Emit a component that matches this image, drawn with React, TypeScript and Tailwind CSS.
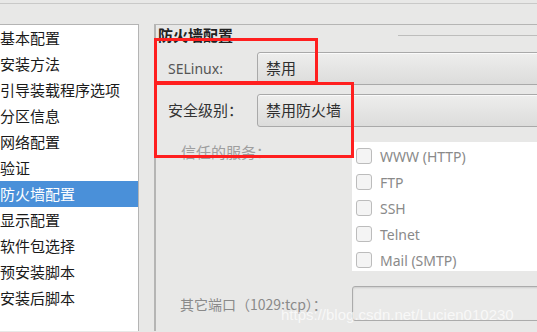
import React from "react";

const navItems = [
  "基本配置",
  "安装方法",
  "引导装载程序选项",
  "分区信息",
  "网络配置",
  "验证",
  "防火墙配置",
  "显示配置",
  "软件包选择",
  "预安装脚本",
  "安装后脚本",
];

const services = ["WWW (HTTP)", "FTP", "SSH", "Telnet", "Mail (SMTP)"];

const cjk = "font-['Noto_Sans_CJK_SC','Noto_Sans',sans-serif]";

function Combo({ value }: { value: string }) {
  return (
    <div className="flex-1 h-[33px] -mr-[4px] rounded-[3px] border border-[#a9a9a9] bg-gradient-to-b from-[#eeeeed] to-[#dcdcdb] shadow-[inset_0_1px_0_#fafafa] flex items-center pl-[8px]">
      <span className="text-[15px] text-[#2e2e2e]">{value}</span>
    </div>
  );
}

export default function App() {
  return (
    <div className={`relative w-[537px] h-[332px] overflow-hidden bg-[#e8e8e7] ${cjk}`}>
      <div className="h-[4px] border-b border-[#c9c9c8]" />

      <div className="flex mt-[20px] h-[307px]">
        {/* Lista lateral */}
        <div className="w-[139px] bg-white border-t border-r border-[#b4b4b4]">
          {navItems.map((item) => (
            <div
              key={item}
              className={`h-[26px] flex items-center text-[15px] whitespace-nowrap ${
                item === "防火墙配置" ? "bg-[#4a90d9] text-white" : "text-[#1a1a1a]"
              }`}
            >
              {item}
            </div>
          ))}
        </div>

        <div className="w-[15px]" />

        {/* Marco de configuración */}
        <div className="flex-1 border-l-2 border-t border-[#b5b5b4]">
          <div className="flex items-start h-[19px]">
            <span className="pl-[2px] pt-[2px] text-[15px] font-bold text-[#222] leading-none">防火墙配置</span>
            <div className="flex-1 ml-[165px] h-[11px] border-b border-[#bdbdbc]" />
          </div>

          <div className="flex items-center mt-[8px] pl-[12px]">
            <span className="w-[89px] text-[14px] text-[#555] font-['Noto_Sans',sans-serif]">SELinux:</span>
            <Combo value="禁用" />
          </div>

          <div className="flex items-center mt-[9px] pl-[12px]">
            <span className="w-[89px] text-[15px] text-[#333]">安全级别：</span>
            <Combo value="禁用防火墙" />
          </div>

          <div className="flex mt-[15px]">
            <span className="w-[196px] pl-[25px] pt-[1px] text-[15px] text-[#9e9e9e] leading-[18px]">信任的服务：</span>
            <div className="flex-1 h-[129px] bg-white pt-[1px]">
              {services.map((s) => (
                <div key={s} className="h-[26px] flex items-center pl-[4px]">
                  <span className="w-[16px] h-[16px] rounded-[3px] border border-[#bcbcbc] bg-[#f4f4f4]" />
                  <span className="ml-[8px] text-[14px] text-[#8a8a8a] font-['Noto_Sans',sans-serif]">{s}</span>
                </div>
              ))}
            </div>
          </div>

          <div className="flex items-center mt-[15px]">
            <span className="w-[196px] pl-[24px] pt-[2px] text-[14px] text-[#8a8a8a] whitespace-nowrap">其它端口（1029:tcp）：</span>
            <div className="flex-1 h-[35px] -mr-[4px] rounded-[3px] border border-[#ababab] bg-[#e9e9e8] shadow-[inset_0_1px_2px_rgba(0,0,0,0.12)]" />
          </div>
        </div>
      </div>

      {/* Recuadros rojos */}
      <div className="absolute left-[154px] top-[38px] w-[164px] h-[46px] border-[3px] border-[#ff1f1f]" />
      <div className="absolute left-[154px] top-[82px] w-[200px] h-[76px] border-[3px] border-[#ff1f1f]" />

      {/* Marca de agua */}
      <div className="absolute left-[281px] top-[304px] text-[15px] text-white/70 font-['Liberation_Sans',sans-serif] pointer-events-none">
        https://blog.csdn.net/Lucien010230
      </div>
    </div>
  );
}
